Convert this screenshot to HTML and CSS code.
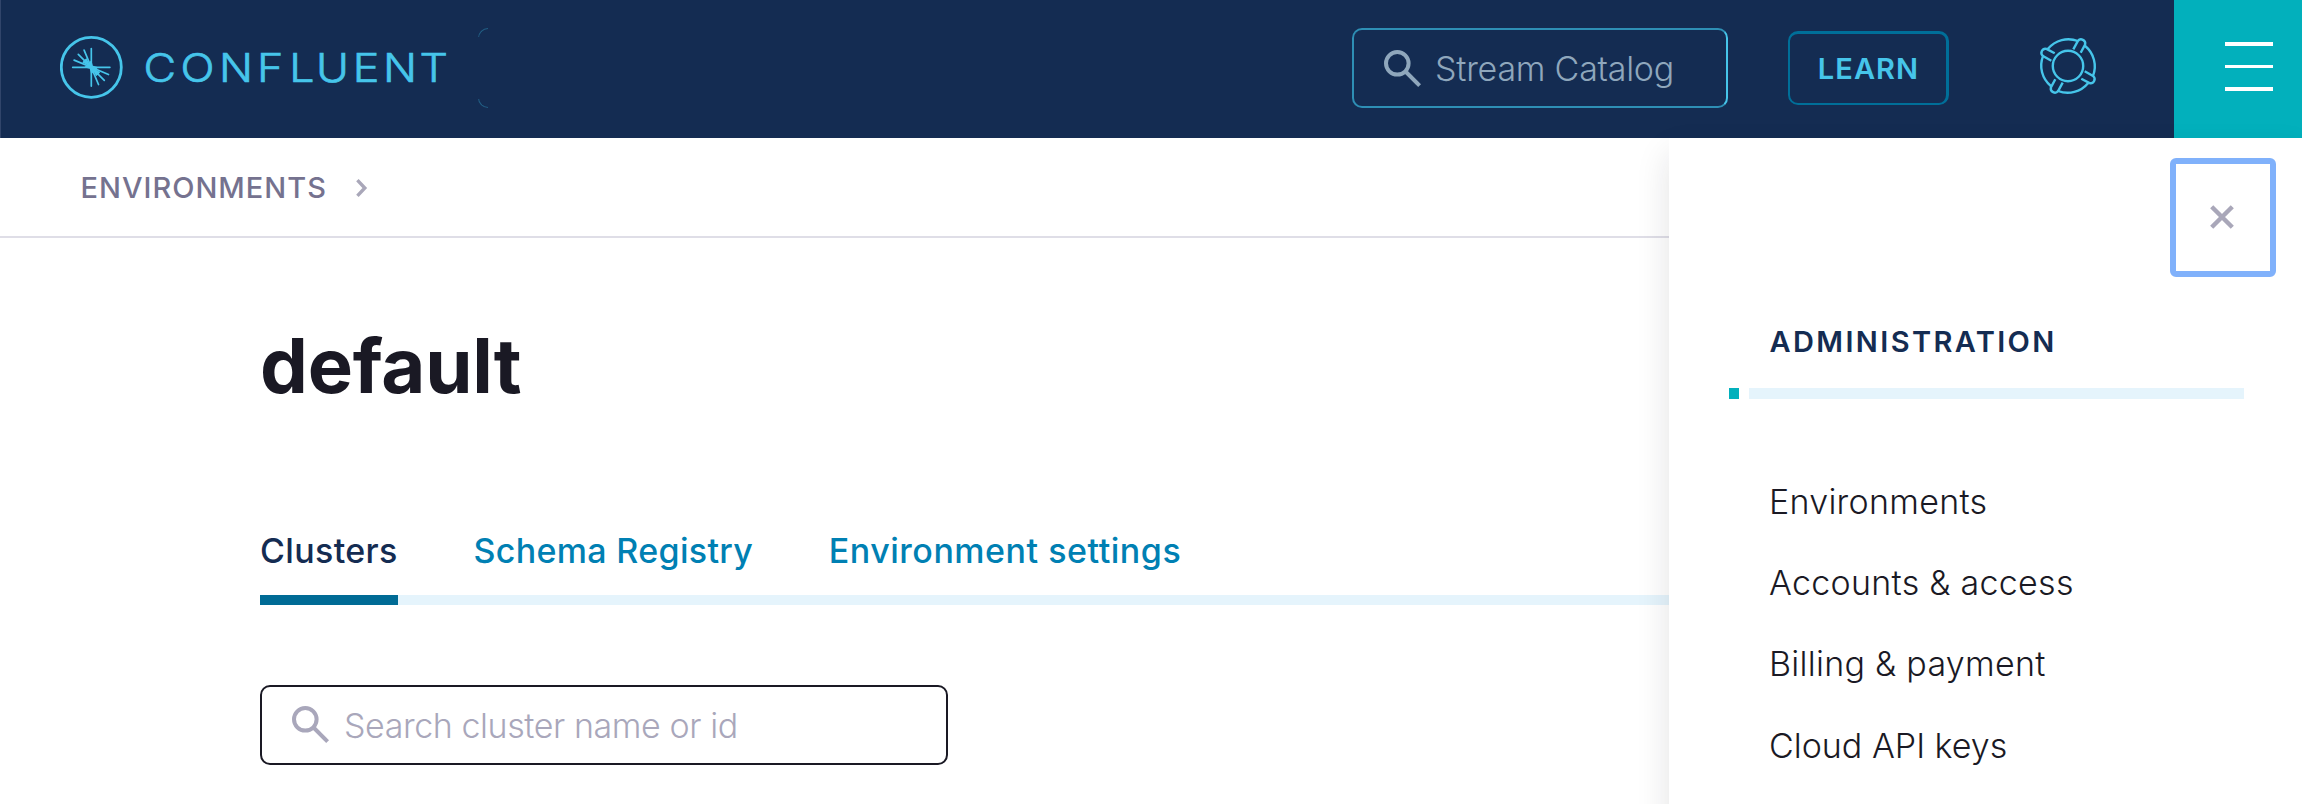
FILE: index.html
```html
<!DOCTYPE html>
<html lang="en">
<head>
<meta charset="utf-8">
<title>default | Confluent</title>
<link rel="stylesheet" href="styles.css">
</head>
<body>
<div class="app">
  <header class="topbar">
    <a class="logo">
      <svg class="logo-svg" viewBox="0 0 400 80" width="400" height="80">
        <g transform="translate(31.3 38.3)" stroke="#46c5ea" stroke-width="1.7" stroke-linecap="round" fill="none">
          <circle r="30" stroke-width="2.8"/>
          <path d="M-18.6 0H18.6M0-18.8V18.8M0 0L-7.2-17.2M0 0L-13-13M0 0L-17.2-7.2M0 0L7.2 17.2M0 0L13 13M0 0L17.2 7.2"/>
          <path d="M0 0L-9-4.8A10 10 0 0 1-4.8-9ZM0 0L9 4.8A10 10 0 0 1 4.8 9ZM-7 0L0-7L2 0L0 2ZM7 0L0 7L-2 0L0-2Z" fill="#46c5ea" stroke="none"/>
        </g>
        <text class="wordmark" transform="scale(1.12 1)" y="52.6" x="74.6 107.6 142 175.8 204.6 228.6 261.5 288.4 320.9">CONFLUENT</text>
      </svg>
    </a>
    <span class="search-stub"></span>
    <div class="catalog-search">
      <svg class="search-icon" viewBox="0 0 38 38" width="38" height="38"><circle cx="13.3" cy="13.3" r="11.3"/><path d="M21 21L35.6 35.6"/></svg>
      <span class="catalog-text">Stream Catalog</span>
    </div>
    <button class="learn">LEARN</button>
    <a class="help">
      <svg viewBox="-32 -32 64 64" width="64" height="64" fill="none" stroke="#46c5ea" stroke-width="2.4" stroke-linecap="butt">
        <circle r="15.2"/>
        <g id="lug"><path d="M5.3-16.7L9.9-25A4.1 4.1 0 0 1 17.1-21.5L12.7-13.3M17.2-20A26.4 26.4 0 0 1 25 9.9"/></g>
        <use href="#lug" transform="rotate(90)"/>
        <use href="#lug" transform="rotate(180)"/>
        <use href="#lug" transform="rotate(270)"/>
      </svg>
    </a>
    <button class="menu"><i></i><i></i><i></i></button>
  </header>
  <nav class="breadcrumb">
    <span>ENVIRONMENTS</span>
    <svg viewBox="0 0 12 18" width="12" height="18"><path d="M1.4 1.2L8.8 9L1.4 16.8"/></svg>
  </nav>
  <main class="content">
    <h1 class="title">default</h1>
    <div class="tabs">
      <a class="tab active">Clusters</a>
      <a class="tab schema">Schema Registry</a>
      <a class="tab settings">Environment settings</a>
    </div>
    <div class="cluster-search">
      <svg class="search-icon" viewBox="0 0 38 38" width="38" height="38"><circle cx="13.3" cy="13.3" r="11.3"/><path d="M21 21L35.6 35.6"/></svg>
      <span class="cluster-text">Search cluster name or id</span>
    </div>
  </main>
  <aside class="panel">
    <button class="close"><svg viewBox="0 0 24 24" width="24" height="24"><path d="M1.7 1.7L22.3 22.3M22.3 1.7L1.7 22.3"/></svg></button>
    <h2 class="panel-title">ADMINISTRATION</h2>
    <div class="rule"><i class="rule-dot"></i><i class="rule-bar"></i></div>
    <ul class="links">
      <li>Environments</li>
      <li>Accounts &amp; access</li>
      <li>Billing &amp; payment</li>
      <li class="keys">Cloud API keys</li>
    </ul>
  </aside>
</div>
</body>
</html>
```
FILE: styles.css
```css
* { box-sizing: border-box; }
body { margin: 0; background: #fff; font-family: Inter, "Liberation Sans", sans-serif; }
button { font-family: inherit; background: none; border: 0; padding: 0; margin: 0; }
.app { position: relative; width: 2302px; height: 804px; overflow: hidden; background: #fff; }

.topbar { height: 138px; display: flex; align-items: flex-start; background: #142c52; border-left: 1px solid #31456a; }
.logo { margin: 29px 0 0 59px; width: 400px; height: 80px; }
.logo-svg { display: block; }
.wordmark { font-size: 40px; font-weight: 300; fill: #46c5ea; stroke: #46c5ea; stroke-width: 0.7px; }
.search-stub { width: 10px; height: 80px; margin: 28px 0 0 18px; border: 1px solid #2e8fb5; border-width: 1px 0 1px 1px; border-radius: 10px 0 0 10px; opacity: 0.5; clip-path: polygon(0 0, 100% 0, 100% 9px, 0 9px, 0 71px, 100% 71px, 100% 100%, 0 100%); }
.catalog-search { width: 376px; height: 80px; margin: 28px 0 0 864px; padding-left: 30px; border: 2px solid #2e8fb5; border-right-color: #46c5ea; border-radius: 10px; display: flex; align-items: flex-start; color: #8fa7bc; }
.search-icon { flex: none; margin-top: 20px; fill: none; stroke: currentColor; stroke-width: 4; }
.catalog-text { margin-left: 13px; font-size: 34px; font-weight: 300; line-height: 78px; letter-spacing: -0.23px; white-space: nowrap; }
.learn { width: 161px; height: 74px; margin: 31px 0 0 60px; padding-left: 1px; border: 2px solid #006f99; border-top-width: 3px; border-right-width: 3px; border-radius: 10px; color: #46c5ea; font-size: 29px; font-weight: 600; line-height: 70px; letter-spacing: 1.1px; }
.help { margin: 34px 0 0 87px; width: 64px; height: 64px; }
.help svg { display: block; }
.menu { width: 128px; height: 138px; margin-left: auto; padding: 42px 0 0 51px; background: #02b0bc; display: flex; flex-direction: column; gap: 19px; }
.menu i { width: 48px; height: 3.7px; background: #fff; }

.breadcrumb { height: 100px; padding-left: 80.5px; border-bottom: 2px solid #dfdee7; display: flex; align-items: flex-start; font-size: 29px; font-weight: 500; line-height: 99px; letter-spacing: 1px; color: #75728f; }
.breadcrumb svg { margin: 41px 0 0 29.5px; fill: none; stroke: #a9a7b9; stroke-width: 3.4; }

.content { padding-left: 260px; }
.title { margin: 0; padding-top: 77px; font-size: 76px; font-weight: 700; line-height: 100px; letter-spacing: -0.23px; color: #1a1924; }
.tabs { height: 190px; padding-top: 90px; display: flex; gap: 75.5px; border-bottom: 10px solid #e5f4fc; font-size: 34px; font-weight: 500; color: #0080b3; }
.tab { height: 100px; line-height: 91px; border-bottom: 10px solid transparent; white-space: nowrap; }
.tab.active { width: 138px; color: #142c52; border-color: #006b95; letter-spacing: 0.34px; }
.tab.schema { letter-spacing: 0.32px; }
.tab.settings { letter-spacing: 0.52px; }
.cluster-search { width: 688px; height: 80px; margin-top: 80px; padding-left: 30px; border: 2px solid #1a1924; border-radius: 10px; display: flex; align-items: flex-start; color: #a9a7bb; }
.cluster-search .search-icon { margin-top: 19px; }
.cluster-text { margin-left: 14px; font-size: 34px; font-weight: 300; line-height: 77px; letter-spacing: -0.42px; white-space: nowrap; }

.panel { position: absolute; left: 1669px; top: 138px; width: 633px; height: 700px; background: #fff; box-shadow: 0 16px 32px rgba(26, 25, 36, 0.12); }
.close { display: flex; align-items: center; justify-content: center; width: 106px; height: 119px; margin: 20px 0 0 501px; padding: 0 2px 2px 0; border: 6px solid #80b1fb; border-radius: 6px; }
.close svg { fill: none; stroke: #a9a7b9; stroke-width: 4.4; }
.panel-title { margin: 40px 0 0 100.5px; font-size: 29px; font-weight: 600; line-height: 50px; letter-spacing: 2.38px; color: #142c52; }
.rule { display: flex; gap: 10px; margin: 21px 0 0 60px; }
.rule i { height: 10.5px; }
.rule-dot { width: 10px; background: #02b0bc; }
.rule-bar { width: 495px; background: #e5f4fc; }
.links { list-style: none; margin: 62px 0 0; padding: 0 0 0 100px; font-size: 34px; font-weight: 300; line-height: 81.4px; letter-spacing: 0.27px; color: #1a1924; }
.keys { letter-spacing: 0; }
```
